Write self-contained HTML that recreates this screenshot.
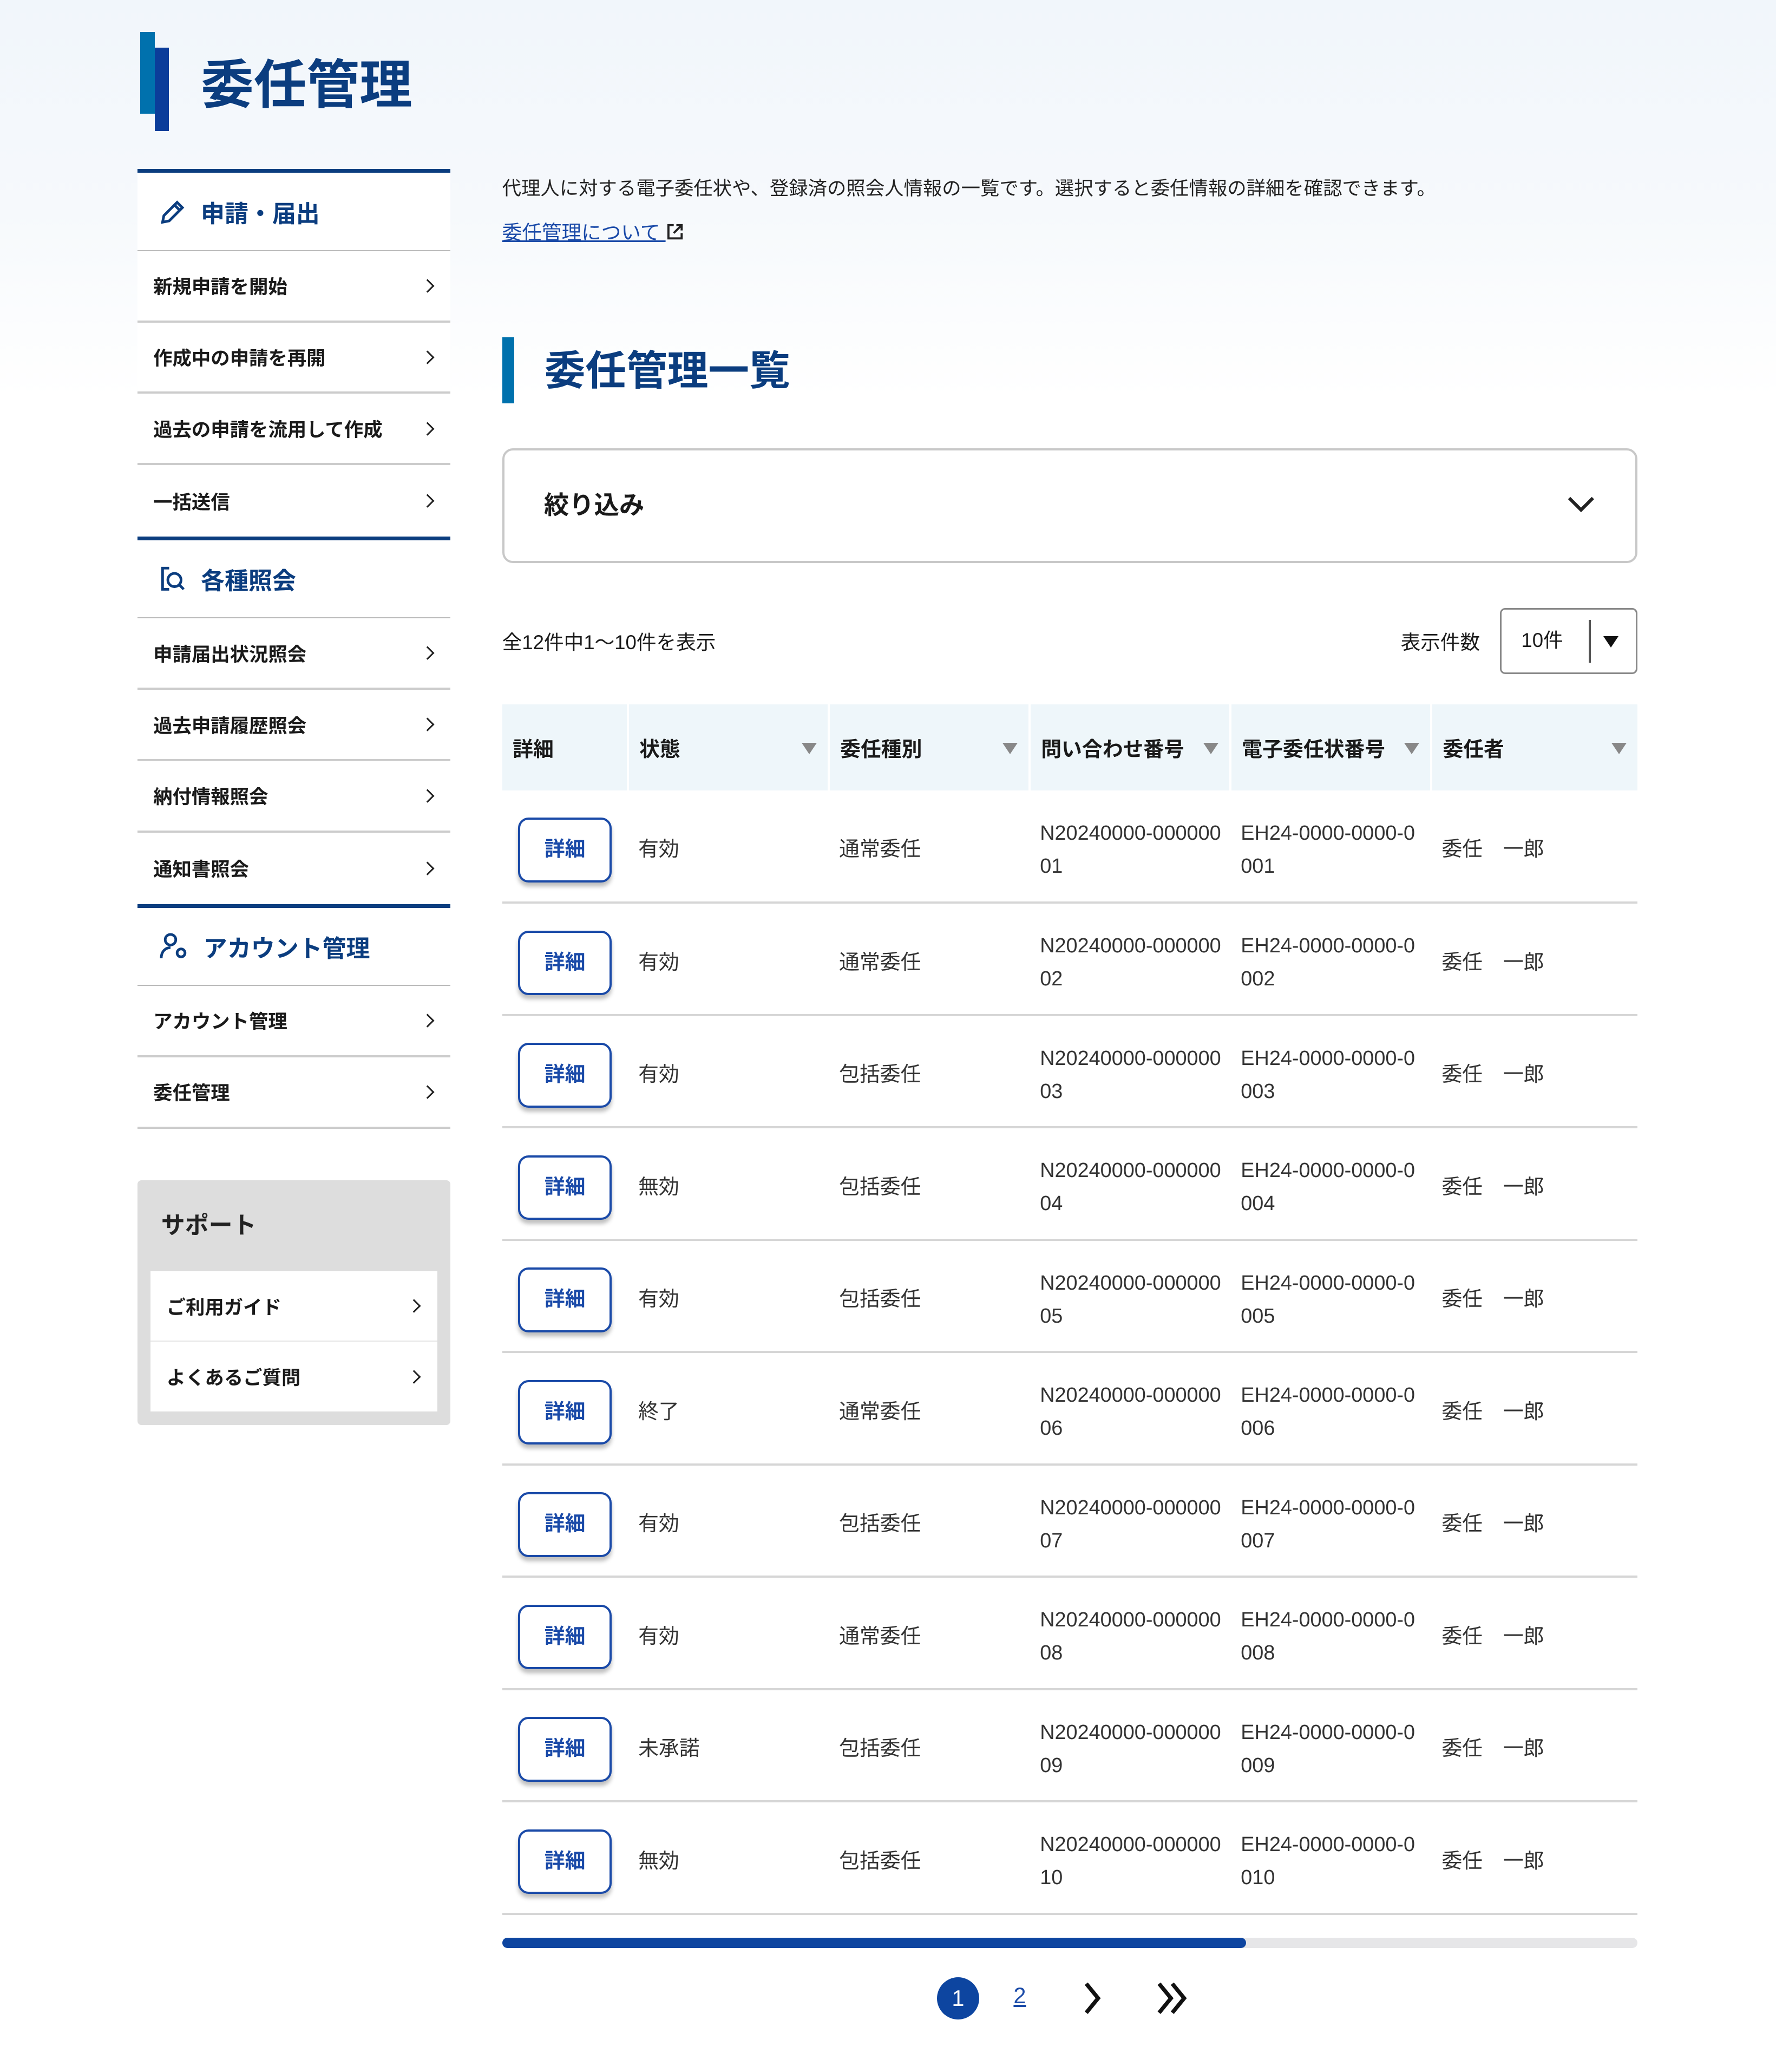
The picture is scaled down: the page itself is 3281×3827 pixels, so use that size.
<!DOCTYPE html>
<html><head><meta charset="utf-8"><style>
*{box-sizing:border-box;margin:0;padding:0}
html,body{width:3281px;height:3827px;overflow:hidden;background:#fff}
#r{zoom:2.44122;width:1344px;height:1568px;position:relative;font-family:"Liberation Sans","Noto Sans CJK JP",sans-serif;color:#1a1a1a;background:linear-gradient(#f1f6fb 0,#f6f9fc 160px,#fff 300px)}
.a{position:absolute}
.t1{left:152px;top:37px;font-size:40px;font-weight:700;color:#0b3d7f;line-height:56px}
.side{left:104px;top:128px;width:237px}
.sh{height:62px;border-top:3px solid #0b3d7f;background:#fff;display:flex;align-items:center;padding-left:16px;font-size:18px;font-weight:700;color:#0b3d7f;border-bottom:1px solid #bbb}
.sh svg{margin-right:10px}
.it{height:54px;background:#fff;border-bottom:2px solid #ccc;display:flex;align-items:center;justify-content:space-between;padding:0 14px 0 12px;font-size:14.5px;font-weight:700}
.it:after{content:"";width:6px;height:6px;border-right:1.6px solid #222;border-top:1.6px solid #222;transform:rotate(45deg)}
.sup{left:104px;top:893px;width:237px;height:185px;background:#ddd;border-radius:3px;padding:0 10px}
.sup .h{font-size:18px;font-weight:700;height:69px;line-height:69px;padding-left:8px;color:#222}
.sup .it{height:53px;border-bottom:1px solid #e5e5e5}
.desc{left:380px;top:131px;font-size:14.5px;color:#222}
.lnk{left:380px;top:164px;font-size:15px;color:#1a4aa8;text-decoration:underline}
.h2b{left:380px;top:255px;width:9px;height:50px;background:#0071ad}
.h2{left:412px;top:259px;font-size:31px;font-weight:700;color:#0b3d7f;line-height:44px}
.flt{left:380px;top:339px;width:859px;height:87px;border:2px solid #c8c8c8;border-radius:8px;background:#fff;font-size:19px;font-weight:700;padding-left:30px;line-height:83px}
.cnt{left:380px;top:474px;font-size:15px}
.sel{left:1135px;top:460px;width:104px;height:50px;border:1.5px solid #888;border-radius:4px;background:#fff;font-size:15px;line-height:47px;padding-left:15px}
table{position:absolute;left:380px;top:533px;width:859px;border-collapse:collapse;font-size:15.5px}
th{height:65px;background:#eef6fa;text-align:left;font-weight:700;padding-left:8px;position:relative;border-left:2px solid #fff}
th:first-child{border-left:0}
th.s:after{content:"";position:absolute;right:8px;top:29px;border-left:6px solid transparent;border-right:6px solid transparent;border-top:9px solid #888}
td{height:85px;border-bottom:2px solid #d6d6d6;padding-left:8px;padding-top:6px;line-height:25px;color:#333}
td:first-child{padding-left:12px}
.b{width:71px;height:49px;border:2px solid #1a4aa8;border-radius:8px;color:#1a4aa8;font-weight:700;display:flex;align-items:center;justify-content:center;box-shadow:0 3px 3px rgba(0,0,0,.25);background:#fff}
</style></head><body><div id="r">
<div class="a" style="left:106px;top:24px;width:11px;height:62px;background:#0071ad"></div>
<div class="a" style="left:117px;top:36px;width:11px;height:63px;background:#0b3d9a"></div>
<div class="a t1">委任管理</div>
<div class="a side">
<div class="sh"><svg width="22" height="22" viewBox="0 0 22 22" fill="none" stroke="#0b3d7f" stroke-width="2"><path d="M3 19l1-5L14 4l4 4L8 18z M12 6l4 4"/></svg>申請・届出</div>
<div class="it">新規申請を開始</div><div class="it">作成中の申請を再開</div><div class="it">過去の申請を流用して作成</div><div class="it" style="border-bottom:0">一括送信</div>
<div class="sh"><svg width="22" height="22" viewBox="0 0 22 22" fill="none" stroke="#0b3d7f" stroke-width="2"><path d="M8 3H3v16h5"/><circle cx="12" cy="12" r="5"/><path d="M15.5 15.5L19 19"/></svg>各種照会</div>
<div class="it">申請届出状況照会</div><div class="it">過去申請履歴照会</div><div class="it">納付情報照会</div><div class="it" style="border-bottom:0">通知書照会</div>
<div class="sh"><svg width="24" height="22" viewBox="0 0 24 22" fill="none" stroke="#0b3d7f" stroke-width="2"><circle cx="9" cy="6" r="4"/><path d="M2 20c0-5 3-8 7-8"/><circle cx="17" cy="16" r="3"/></svg>アカウント管理</div>
<div class="it">アカウント管理</div><div class="it">委任管理</div>
</div>
<div class="a sup"><div class="h">サポート</div><div class="it">ご利用ガイド</div><div class="it" style="border:0">よくあるご質問</div></div>
<div class="a desc">代理人に対する電子委任状や、登録済の照会人情報の一覧です。選択すると委任情報の詳細を確認できます。</div>
<div class="a lnk">委任管理について <svg width="14" height="14" viewBox="0 0 14 14" fill="none" stroke="#222" stroke-width="1.6" style="vertical-align:-1px"><path d="M6 2H2v10h10V8M8 2h4v4M12 2L6 8"/></svg></div>
<div class="a h2b"></div><div class="a h2">委任管理一覧</div>
<div class="a flt">絞り込み<svg class="a" style="right:30px;top:34px" width="22" height="14" viewBox="0 0 22 14" fill="none" stroke="#222" stroke-width="2.5"><path d="M2 2l9 9 9-9"/></svg></div>
<div class="a cnt">全12件中1～10件を表示</div>
<div class="a" style="left:1060px;top:474px;font-size:15px">表示件数</div>
<div class="a sel">10件<div class="a" style="left:66px;top:8px;width:1.5px;height:32px;background:#555"></div><div class="a" style="left:77px;top:20px;border-left:6px solid transparent;border-right:6px solid transparent;border-top:9px solid #111"></div></div>
<table>
<tr><th style="width:95px">詳細</th><th class="s" style="width:152px">状態</th><th class="s" style="width:152px">委任種別</th><th class="s" style="width:152px">問い合わせ番号</th><th class="s" style="width:152px">電子委任状番号</th><th class="s">委任者</th></tr>
<tr><td><div class="b">詳細</div></td><td>有効</td><td>通常委任</td><td>N20240000-000000<br>01</td><td>EH24-0000-0000-0<br>001</td><td>委任　一郎</td></tr>
<tr><td><div class="b">詳細</div></td><td>有効</td><td>通常委任</td><td>N20240000-000000<br>02</td><td>EH24-0000-0000-0<br>002</td><td>委任　一郎</td></tr>
<tr><td><div class="b">詳細</div></td><td>有効</td><td>包括委任</td><td>N20240000-000000<br>03</td><td>EH24-0000-0000-0<br>003</td><td>委任　一郎</td></tr>
<tr><td><div class="b">詳細</div></td><td>無効</td><td>包括委任</td><td>N20240000-000000<br>04</td><td>EH24-0000-0000-0<br>004</td><td>委任　一郎</td></tr>
<tr><td><div class="b">詳細</div></td><td>有効</td><td>包括委任</td><td>N20240000-000000<br>05</td><td>EH24-0000-0000-0<br>005</td><td>委任　一郎</td></tr>
<tr><td><div class="b">詳細</div></td><td>終了</td><td>通常委任</td><td>N20240000-000000<br>06</td><td>EH24-0000-0000-0<br>006</td><td>委任　一郎</td></tr>
<tr><td><div class="b">詳細</div></td><td>有効</td><td>包括委任</td><td>N20240000-000000<br>07</td><td>EH24-0000-0000-0<br>007</td><td>委任　一郎</td></tr>
<tr><td><div class="b">詳細</div></td><td>有効</td><td>通常委任</td><td>N20240000-000000<br>08</td><td>EH24-0000-0000-0<br>008</td><td>委任　一郎</td></tr>
<tr><td><div class="b">詳細</div></td><td>未承諾</td><td>包括委任</td><td>N20240000-000000<br>09</td><td>EH24-0000-0000-0<br>009</td><td>委任　一郎</td></tr>
<tr><td><div class="b">詳細</div></td><td>無効</td><td>包括委任</td><td>N20240000-000000<br>10</td><td>EH24-0000-0000-0<br>010</td><td>委任　一郎</td></tr>
</table>
<div class="a" style="left:380px;top:1466px;width:859px;height:8px;border-radius:4px;background:#e6e6e8"></div>
<div class="a" style="left:380px;top:1466px;width:563px;height:8px;border-radius:4px;background:#0d45a0"></div>
<div class="a" style="left:709px;top:1496px;width:32px;height:32px;border-radius:50%;background:#0d45a0;color:#fff;font-size:17px;text-align:center;line-height:32px">1</div>
<div class="a" style="left:767px;top:1500px;font-size:17px;color:#1a4aa8;text-decoration:underline">2</div>
<svg class="a" style="left:818px;top:1499px" width="18" height="26" viewBox="0 0 18 26" fill="none" stroke="#111" stroke-width="3"><path d="M4 2l9 11-9 11"/></svg>
<svg class="a" style="left:874px;top:1499px" width="28" height="26" viewBox="0 0 28 26" fill="none" stroke="#111" stroke-width="3"><path d="M3 2l9 11-9 11M13 2l9 11-9 11"/></svg>
</div></body></html>
